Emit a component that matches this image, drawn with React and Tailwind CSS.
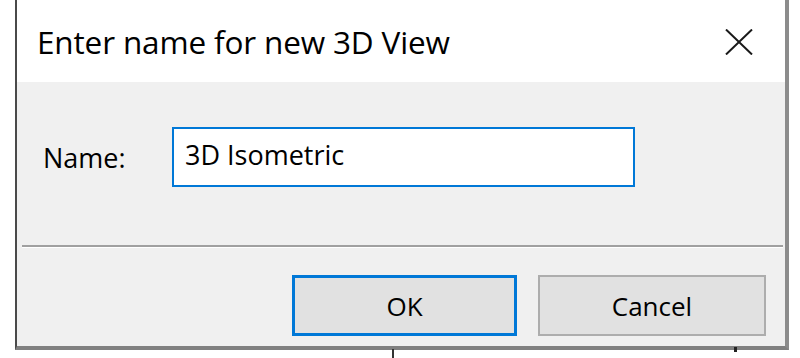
export default function App() {
  return (
    <div className="relative w-[800px] h-[358px] bg-white overflow-hidden font-['Open_Sans',sans-serif] text-black">
      {/* dialog window */}
      <div className="ml-[15px] w-[774px] h-[350px] flex flex-col bg-[#f0f0f0] border-l-2 border-l-[#4a4a4a] border-r-4 border-r-[#8c8c8c] border-b-4 border-b-[#808080]">
        {/* title bar */}
        <div className="h-[82px] shrink-0 bg-white flex items-center justify-between pl-[20px] pr-[32px]">
          <span className="text-[31.5px] leading-none tracking-[-0.15px] pt-[2px]">Enter name for new 3D View</span>
          <svg width="28" height="26" viewBox="0 0 28 26" className="mb-[-1px]">
            <path d="M1 0.5 L27 25.5 M27 0.5 L1 25.5" stroke="#1a1a1a" strokeWidth="2" fill="none" />
          </svg>
        </div>

        {/* body */}
        <div className="flex-1 flex flex-col">
          <div className="flex items-center pt-[45px] pl-[26px]">
            <div className="w-[129px] text-[27px] leading-none">Name:</div>
            <div className="w-[463px] h-[60px] bg-white border-2 border-[#0078d7] flex items-center pl-[11px] pb-[6px] text-[27px] leading-none">
              3D Isometric
            </div>
          </div>

          <div className="mt-[58px] ml-[5px] mr-[2px] h-[3px] border-t-2 border-t-[#a0a0a0] border-b border-b-white" />

          <div className="flex justify-end gap-[21px] pt-[27px] pr-[19px]">
            <button className="w-[225px] h-[61px] bg-[#e1e1e1] border-[3px] border-[#0078d7] text-[26px] leading-none flex items-center justify-center">
              OK
            </button>
            <button className="w-[228px] h-[61px] bg-[#e1e1e1] border-2 border-[#adadad] text-[26px] leading-none flex items-center justify-center">
              Cancel
            </button>
          </div>
        </div>
      </div>

      {/* fragments of the window behind */}
      <div className="absolute left-[392px] top-[349px] w-[2px] h-[9px] bg-[#333]" />
      <div className="absolute left-[734px] top-[347px] w-[3px] h-[5px] bg-[#222]" />
    </div>
  )
}
